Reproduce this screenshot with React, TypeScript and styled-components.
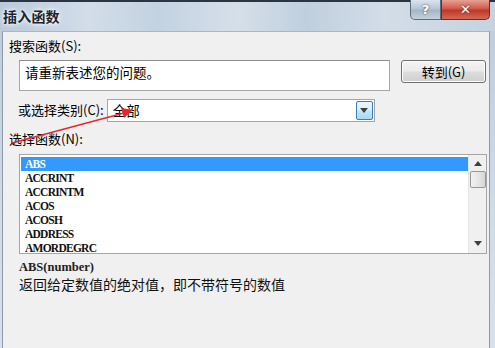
import React from "react";
import styled, { createGlobalStyle } from "styled-components";

const Global = createGlobalStyle`
  html, body { margin: 0; padding: 0; overflow: hidden; }
  body { width: 495px; height: 348px; background: #c9d6e3; font-family: "Noto Sans CJK SC", "Liberation Sans", sans-serif; }
`;

const Window = styled.div`
  position: relative;
  width: 495px;
  height: 348px;
  display: flex;
  flex-direction: column;
  background: linear-gradient(180deg, #bccadb 0%, #cfdbe7 60%, #d7e1ec 100%);
  overflow: hidden;
`;

const TitleBar = styled.div`
  height: 31px;
  flex: none;
  display: flex;
  align-items: flex-start;
  border-top: 2px solid #2b3440;
  box-sizing: border-box;
  background: linear-gradient(90deg, #b9cadb 0%, #d2dde8 18%, #c3d2e1 32%, #d5dfe9 48%, #c0cfde 62%, #d3dde8 78%, #c5d3e0 100%);
`;

const Title = styled.div`
  padding: 5px 0 0 3px;
  font-size: 14px;
  line-height: 18px;
  color: #1a2530;
  font-weight: 600;
  flex: 1;
  letter-spacing: 0.2px;
  text-shadow: 0 0 6px #fff, 0 0 3px #fff;
`;

const CaptionButtons = styled.div`
  display: flex;
  margin-right: 5px;
  margin-top: -2px;
`;

const CapBtn = styled.div<{ $close?: boolean }>`
  width: ${(p) => (p.$close ? 49 : 31)}px;
  height: 20px;
  box-sizing: border-box;
  display: flex;
  align-items: center;
  justify-content: center;
  color: #fff;
  font-size: 13px;
  font-weight: bold;
  font-family: "DejaVu Sans", sans-serif;
  border: 1px solid ${(p) => (p.$close ? "#6d2a22" : "#5d6b7b")};
  border-top: none;
  border-radius: ${(p) => (p.$close ? "0 0 5px 0" : "0 0 0 5px")};
  background: ${(p) =>
    p.$close
      ? "linear-gradient(180deg, #e6a294 0%, #d2594a 45%, #c0382a 55%, #d26a55 100%)"
      : "linear-gradient(180deg, #dbe4ee 0%, #b7c6d6 45%, #a5b6c8 55%, #c3d1df 100%)"};
  text-shadow: 0 0 2px #333;
`;

const Frame = styled.div`
  flex: 1;
  display: flex;
  padding: 0 5px 0 2px;
  min-height: 0;
`;

const Body = styled.div`
  flex: 1;
  background: #f0f0f0;
  border-left: 1px solid #8d9aa8;
  border-right: 1px solid #8d9aa8;
  border-top: 1px solid #a9b7c5;
  display: flex;
  flex-direction: column;
  padding: 5px 0 0 6px;
  position: relative;
`;

const Label = styled.div<{ $indent?: number; $top?: number }>`
  font-size: 13px;
  line-height: 17px;
  color: #000;
  margin-left: ${(p) => p.$indent ?? 0}px;
  margin-top: ${(p) => p.$top ?? 0}px;
  white-space: nowrap;
`;

const Row = styled.div<{ $top: number }>`
  display: flex;
  align-items: flex-start;
  margin-top: ${(p) => p.$top}px;
`;

const SearchBox = styled.div`
  margin-left: 10px;
  width: 371px;
  height: 31px;
  box-sizing: border-box;
  background: #fff;
  border: 1px solid #a6a6a6;
  border-top-color: #8e8e8e;
  font-size: 13.5px;
  line-height: 18px;
  padding: 2px 0 0 5px;
  color: #000;
`;

const GoButton = styled.div`
  margin-left: 11px;
  width: 85px;
  height: 23px;
  box-sizing: border-box;
  border: 1px solid #707070;
  border-radius: 3px;
  background: linear-gradient(180deg, #f4f4f4 0%, #ebebeb 48%, #dddddd 52%, #cfcfcf 100%);
  box-shadow: inset 0 0 0 1px #fbfbfb;
  font-size: 13px;
  line-height: 21px;
  text-align: center;
  color: #000;
`;

const Combo = styled.div`
  margin-left: 3px;
  width: 268px;
  height: 23px;
  box-sizing: border-box;
  background: #fff;
  border: 1px solid #a6a6a6;
  display: flex;
  align-items: center;
  padding: 1px 1px 1px 5px;
  font-size: 13.5px;
`;

const ComboText = styled.div`
  flex: 1;
  line-height: 19px;
`;

const DropBtn = styled.div`
  width: 17px;
  height: 19px;
  box-sizing: border-box;
  border: 1px solid #3c7fb1;
  border-radius: 2px;
  background: linear-gradient(180deg, #eaf6fd 0%, #d9f0fc 45%, #bee6fd 55%, #a7d9f5 100%);
  display: flex;
  align-items: center;
  justify-content: center;
`;

const ListBox = styled.div`
  margin-left: 10px;
  margin-top: 7px;
  width: 468px;
  height: 100px;
  box-sizing: border-box;
  background: #fff;
  border: 1px solid #a6a6a6;
  display: flex;
`;

const Items = styled.div`
  flex: 1;
  padding: 2px 0 0 1px;
  overflow: hidden;
`;

const Item = styled.div<{ $sel?: boolean }>`
  height: 12px;
  line-height: 13px;
  font-family: "Liberation Serif", "DejaVu Serif", serif;
  font-size: 11.5px;
  letter-spacing: -0.75px;
  font-weight: bold;
  padding-left: 3px;
  white-space: nowrap;
  color: ${(p) => (p.$sel ? "#fff" : "#111")};
  background: ${(p) => (p.$sel ? "#3399ff" : "transparent")};
  border: 1px solid ${(p) => (p.$sel ? "#3399ff" : "transparent")};
`;

const ScrollBar = styled.div`
  width: 18px;
  background: #f0f0f0;
  border-left: 1px solid #e4e4e4;
  display: flex;
  flex-direction: column;
  align-items: center;
  padding-top: 6px;
  box-sizing: border-box;
`;

const Thumb = styled.div`
  margin-top: 5px;
  width: 16px;
  height: 17px;
  box-sizing: border-box;
  border: 1px solid #979797;
  border-radius: 2px;
  background: linear-gradient(90deg, #f2f2f2 0%, #e6e6e6 50%, #d6d6d6 100%);
`;

const Spacer = styled.div`
  flex: 1;
`;

const DownArrow = styled.div`
  margin-bottom: 7px;
  display: flex;
`;

const Syntax = styled.div`
  margin: 6px 0 0 10px;
  font-family: "Liberation Serif", "DejaVu Serif", serif;
  font-size: 12.5px;
  line-height: 14px;
  font-weight: bold;
  color: #222;
  letter-spacing: 0px;
  word-spacing: 2px;
`;

const Desc = styled.div`
  margin: 2px 0 0 10px;
  font-size: 14px;
  line-height: 17px;
  color: #111;
`;

const Arrow = styled.svg`
  position: absolute;
  left: 0;
  top: 0;
  pointer-events: none;
`;

const Tri = ({ up }: { up?: boolean }) => (
  <svg width="8" height="5" viewBox="0 0 8 5">
    <path d={up ? "M0 5 L4 0 L8 5 Z" : "M0 0 L8 0 L4 5 Z"} fill="#404040" />
  </svg>
);

const functions = ["ABS", "ACCRINT", "ACCRINTM", "ACOS", "ACOSH", "ADDRESS", "AMORDEGRC"];

export default function App() {
  return (
    <>
      <Global />
      <Window>
        <TitleBar>
          <Title>插入函数</Title>
          <CaptionButtons>
            <CapBtn>?</CapBtn>
            <CapBtn $close>✕</CapBtn>
          </CaptionButtons>
        </TitleBar>
        <Frame>
          <Body>
            <Label>搜索函数(S):</Label>
            <Row $top={6}>
              <SearchBox>请重新表述您的问题。</SearchBox>
              <GoButton>转到(G)</GoButton>
            </Row>
            <Row $top={8}>
              <Label $indent={9} $top={2}>或选择类别(C):</Label>
              <Combo>
                <ComboText>全部</ComboText>
                <DropBtn>
                  <Tri />
                </DropBtn>
              </Combo>
            </Row>
            <Label $top={8}>选择函数(N):</Label>
            <ListBox>
              <Items>
                {functions.map((f, i) => (
                  <Item key={f} $sel={i === 0}>
                    {f}
                  </Item>
                ))}
              </Items>
              <ScrollBar>
                <Tri up />
                <Thumb />
                <Spacer />
                <DownArrow>
                  <Tri />
                </DownArrow>
              </ScrollBar>
            </ListBox>
            <Syntax>ABS(number)</Syntax>
            <Desc>返回给定数值的绝对值，即不带符号的数值</Desc>
          </Body>
        </Frame>
        <Arrow width="495" height="348" viewBox="0 0 495 348">
          <line x1="12" y1="143" x2="124" y2="113" stroke="#e8262a" strokeWidth="1.3" />
          <path d="M133 110 L121 108 L124 118 Z" fill="#e8262a" />
        </Arrow>
      </Window>
    </>
  );
}
